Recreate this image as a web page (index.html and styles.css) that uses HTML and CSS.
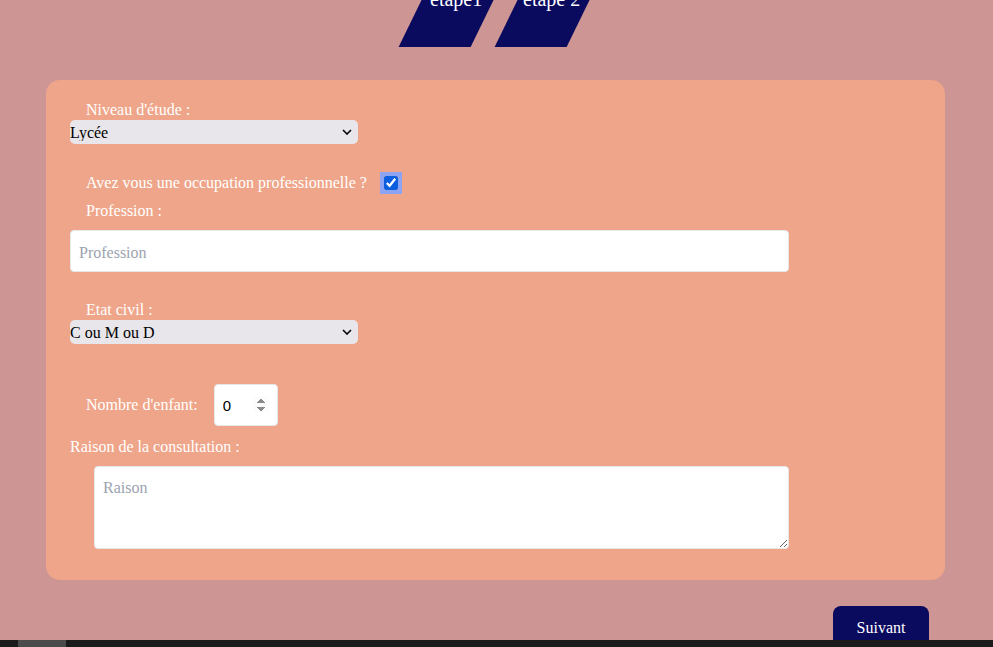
FILE: index.html
```html
<!DOCTYPE html>
<html lang="fr">
<head>
<meta charset="utf-8">
<title>Formulaire</title>
<link rel="stylesheet" href="styles.css">
</head>
<body>
<nav class="steps">
  <div class="step"><span class="step-label">étape1</span></div>
  <div class="step"><span class="step-label">étape 2</span></div>
</nav>

<form class="card">
  <label class="lbl indent" for="niveau">Niveau d'étude :</label>
  <div class="sel-wrap">
    <select id="niveau" class="sel">
      <option>Lycée</option>
    </select>
    <svg class="chev" width="10" height="6" viewBox="0 0 10 6"><path d="M1 1 L5 5 L9 1" fill="none" stroke="#000" stroke-width="1.6"/></svg>
  </div>

  <div class="row-check">
    <label class="lbl" for="occ">Avez vous une occupation professionnelle ?</label>
    <input id="occ" type="checkbox" class="chk" checked>
  </div>

  <label class="lbl indent prof-lbl" for="prof">Profession :</label>
  <input id="prof" type="text" class="txt" placeholder="Profession">

  <label class="lbl indent etat-lbl" for="etat">Etat civil :</label>
  <div class="sel-wrap">
    <select id="etat" class="sel">
      <option>C ou M ou D</option>
    </select>
    <svg class="chev" width="10" height="6" viewBox="0 0 10 6"><path d="M1 1 L5 5 L9 1" fill="none" stroke="#000" stroke-width="1.6"/></svg>
  </div>

  <div class="row-num">
    <label class="lbl" for="enf">Nombre d'enfant:</label>
    <input id="enf" type="number" class="num" value="0">
  </div>

  <label class="lbl raison-lbl" for="raison">Raison de la consultation :</label>
  <textarea id="raison" class="area" placeholder="Raison"></textarea>
</form>

<div class="actions">
  <button type="button" class="btn">Suivant</button>
</div>

<div class="hscroll"><div class="hscroll-thumb"></div></div>
</body>
</html>
```

FILE: styles.css
```css
html, body {
  margin: 0;
  padding: 0;
}
body {
  background: #cd9594;
  font-family: "Liberation Serif", "Times New Roman", serif;
  color: #fff;
  overflow: hidden;
  height: 647px;
}

.steps {
  display: flex;
  justify-content: center;
  gap: 24px;
  margin-top: -16px;
  padding-left: 3px;
}
.step {
  width: 72px;
  height: 63px;
  background: #0a0a5e;
  transform: skewX(-26deg);
  display: flex;
  justify-content: center;
}
.step-label {
  transform: skewX(26deg);
  font-size: 20px;
  line-height: 22px;
  padding-top: 4px;
  color: #fff;
  white-space: nowrap;
  margin-left: 12px;
}

.card {
  margin: 33px 48px 0 46px;
  background: #efa589;
  border-radius: 14px;
  padding: 21px 24px 31px 24px;
  display: flex;
  flex-direction: column;
  align-items: flex-start;
}

.lbl {
  font-size: 16px;
  line-height: 18px;
  color: #fff;
}
.indent {
  margin-left: 16px;
}

.sel-wrap {
  position: relative;
  margin-top: 1px;
  width: 288px;
  height: 24px;
}
.sel {
  display: block;
  appearance: none;
  -webkit-appearance: none;
  width: 288px;
  height: 24px;
  border: none;
  border-radius: 5px;
  background: #e8e6eb;
  font-family: "Liberation Serif", "Times New Roman", serif;
  font-size: 16px;
  color: #000;
  padding: 0;
  margin: 0;
}
.chev {
  position: absolute;
  right: 6px;
  top: 9px;
  pointer-events: none;
}

.row-check {
  display: flex;
  align-items: center;
  gap: 17px;
  margin-left: 16px;
  margin-top: 30px;
}
.chk {
  width: 14px;
  height: 14px;
  margin: 0;
  accent-color: #0b5ee0;
  box-shadow: 0 0 0 4px #8ca4f2;
  border-radius: 2px;
}

.prof-lbl {
  margin-top: 10px;
}
.txt {
  margin-top: 10px;
  width: 719px;
  height: 42px;
  box-sizing: border-box;
  border: 1px solid #e5e7eb;
  border-radius: 4px;
  background: #fff;
  padding: 3px 8px 0;
  font-family: "Liberation Serif", "Times New Roman", serif;
  font-size: 16px;
}
.txt::placeholder,
.area::placeholder {
  color: #9ca3af;
}

.etat-lbl {
  margin-top: 29px;
}

.row-num {
  display: flex;
  align-items: center;
  gap: 16px;
  margin-left: 16px;
  margin-top: 40px;
}
.num {
  width: 64px;
  height: 42px;
  box-sizing: border-box;
  border: 1px solid #e5e7eb;
  border-radius: 4px;
  background: #fff;
  padding: 0 8px;
  font-family: "Liberation Sans", Arial, sans-serif;
  font-size: 15px;
  color: #000;
}
.num::-webkit-inner-spin-button {
  opacity: 1;
}

.raison-lbl {
  margin-top: 12px;
}
.area {
  margin-top: 10px;
  margin-left: 24px;
  width: 695px;
  height: 83px;
  box-sizing: border-box;
  border: 1px solid #e5e7eb;
  border-radius: 4px;
  background: #fff;
  padding: 12px 8px;
  font-family: "Liberation Serif", "Times New Roman", serif;
  font-size: 16px;
}

.actions {
  display: flex;
  justify-content: flex-end;
  margin-top: 26px;
  padding-right: 64px;
}
.btn {
  width: 96px;
  height: 44px;
  border: none;
  border-radius: 8px;
  background: #0a0a5e;
  color: #fff;
  font-family: "Liberation Serif", "Times New Roman", serif;
  font-size: 16px;
}

.hscroll {
  position: fixed;
  left: 0;
  right: 0;
  bottom: 0;
  height: 7px;
  background: #1b1b1b;
}
.hscroll-thumb {
  margin-left: 18px;
  width: 48px;
  height: 7px;
  background: #4b4b4b;
}
```
